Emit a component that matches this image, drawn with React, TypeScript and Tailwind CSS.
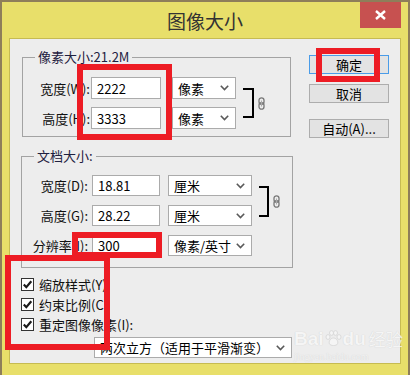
import type { ReactNode } from 'react';

const FONT = '"Noto Sans CJK SC", "Noto Sans", sans-serif';

function Chevron() {
  return (
    <svg width="9" height="6" viewBox="0 0 9 6" className="shrink-0">
      <path d="M0.8 0.8 L4.5 4.5 L8.2 0.8" fill="none" stroke="#5a5a5a" strokeWidth="1.6" />
    </svg>
  );
}

function Select({ value, w, h = 21 }: { value: string; w: number; h?: number }) {
  return (
    <div
      className="flex shrink-0 items-center justify-between border border-[#ababab] bg-white pl-[5px] pr-[6px] text-[13px] text-black"
      style={{ width: w, height: h }}
    >
      <span className="leading-none">{value}</span>
      <Chevron />
    </div>
  );
}

function Field({ value, w, h = 21 }: { value: string; w: number; h?: number }) {
  return (
    <div
      className="flex shrink-0 items-center border border-[#ababab] bg-white pl-[5px] text-[13px] text-black"
      style={{ width: w, height: h }}
    >
      <span className="leading-none">{value}</span>
    </div>
  );
}

function LinkIcon() {
  return (
    <svg width="7" height="13" viewBox="0 0 7 13" className="shrink-0">
      <rect x="1" y="0.8" width="5" height="6.5" rx="2.5" fill="none" stroke="#777" strokeWidth="1.3" />
      <rect x="1" y="5.7" width="5" height="6.5" rx="2.5" fill="none" stroke="#777" strokeWidth="1.3" />
      <line x1="3.5" y1="3.5" x2="3.5" y2="9.5" stroke="#aaa" strokeWidth="1" />
    </svg>
  );
}

function Bracket({ h, w }: { h: number; w: number }) {
  return <div className="shrink-0 border-y-2 border-r-2 border-black" style={{ width: w, height: h }} />;
}

function Group({ title, className, children }: { title: string; className: string; children: ReactNode }) {
  return (
    <div className={`relative border border-[#a3a3a3] ${className}`}>
      <span className="absolute left-[12px] top-[-10px] bg-[#ededed] px-[3px] text-[13px] leading-[18px] text-[#1e2040]">
        {title}
      </span>
      {children}
    </div>
  );
}

function Label({ text, w }: { text: string; w: number }) {
  return (
    <span className="shrink-0 text-right text-[13px] leading-none text-[#111]" style={{ width: w }}>
      {text}
    </span>
  );
}

function Check({ label }: { label: string }) {
  return (
    <div className="flex h-[20px] items-center">
      <div className="flex h-[13px] w-[13px] items-center justify-center border border-[#333] bg-white">
        <svg width="11" height="11" viewBox="0 0 11 11">
          <path d="M1.8 5.6 L4.3 8.2 L9.3 2.3" fill="none" stroke="#1a1a1a" strokeWidth="2.2" />
        </svg>
      </div>
      <span className="ml-[5px] text-[13px] leading-none text-[#111]">{label}</span>
    </div>
  );
}

function Btn({ text, focus }: { text: string; focus?: boolean }) {
  return (
    <div
      className={`flex h-[19px] w-[80px] items-center justify-center border bg-[#e3e3e3] text-[13px] leading-none text-black ${
        focus ? 'border-[#4a9ce8]' : 'border-[#adadad]'
      }`}
    >
      {text}
    </div>
  );
}

function RedBox({ x, y, w, h }: { x: number; y: number; w: number; h: number }) {
  return (
    <div
      className="pointer-events-none absolute border-[6px] border-[#ed1c24]"
      style={{ left: x, top: y, width: w, height: h }}
    />
  );
}

function Paw() {
  return (
    <svg width="17" height="17" viewBox="0 0 17 17" className="mx-[1px]">
      <g fill="#f7f7f7" stroke="#cfcfcf" strokeWidth="0.8">
        <ellipse cx="3" cy="7" rx="2" ry="2.4" />
        <ellipse cx="6.5" cy="3" rx="2" ry="2.4" />
        <ellipse cx="10.5" cy="3" rx="2" ry="2.4" />
        <ellipse cx="14" cy="7" rx="2" ry="2.4" />
        <path d="M8.5 8 C5 8 3.5 12 4.5 14 C5.5 16 11.5 16 12.5 14 C13.5 12 12 8 8.5 8 Z" />
      </g>
    </svg>
  );
}

export default function App() {
  return (
    <div className="relative h-[375px] w-[410px] overflow-hidden bg-[#8e7e5a]" style={{ fontFamily: FONT }}>
      <div className="ml-[2px] mt-[2px] h-[373px] w-[406px] bg-[#e8df6a]">
        {/* title bar */}
        <div className="relative flex h-[36px] items-center justify-center">
          <span className="text-[19px] leading-none text-[#333]">图像大小</span>
          <div className="absolute right-[7px] top-0 flex h-[26px] w-[41px] items-center justify-center bg-[#c75150]">
            <svg width="11" height="10" viewBox="0 0 11 10">
              <path d="M1 1 L10 9 M10 1 L1 9" stroke="white" strokeWidth="2.4" />
            </svg>
          </div>
        </div>

        {/* client area */}
        <div className="ml-[7px] h-[326px] w-[392px] border border-[#c6bb52] bg-[#ededed]">
          <div className="flex items-start">
            <Group title="像素大小:21.2M" className="ml-[12px] mt-[18px] h-[80px] w-[269px]">
              <div className="flex pt-[19px]">
                <div className="flex flex-col gap-[8px]">
                  <div className="flex h-[22px] items-center">
                    <Label text="宽度(W):" w={67} />
                    <div className="ml-[1px]">
                      <Field value="2222" w={70} h={22} />
                    </div>
                    <div className="ml-[11px]">
                      <Select value="像素" w={64} h={22} />
                    </div>
                  </div>
                  <div className="flex h-[22px] items-center">
                    <Label text="高度(H):" w={67} />
                    <div className="ml-[1px]">
                      <Field value="3333" w={70} h={22} />
                    </div>
                    <div className="ml-[11px]">
                      <Select value="像素" w={64} h={22} />
                    </div>
                  </div>
                </div>
                <div className="ml-[7px] mt-[11px]">
                  <Bracket w={11} h={30} />
                </div>
                <div className="ml-[4px] mt-[20px]">
                  <LinkIcon />
                </div>
              </div>
            </Group>

            <div className="ml-[18px] mt-[16px] flex flex-col">
              <Btn text="确定" focus />
              <div className="mt-[10px]">
                <Btn text="取消" />
              </div>
              <div className="mt-[16px]">
                <Btn text="自动(A)..." />
              </div>
            </div>
          </div>

          <Group title="文档大小:" className="ml-[11px] mt-[18px] h-[112px] w-[272px]">
            <div className="flex pt-[18px]">
              <div className="flex flex-col gap-[9px]">
                <div className="flex h-[21px] items-center">
                  <Label text="宽度(D):" w={66} />
                  <div className="ml-[4px]">
                    <Field value="18.81" w={68} />
                  </div>
                  <div className="ml-[8px]">
                    <Select value="厘米" w={84} />
                  </div>
                </div>
                <div className="flex h-[21px] items-center">
                  <Label text="高度(G):" w={66} />
                  <div className="ml-[4px]">
                    <Field value="28.22" w={68} />
                  </div>
                  <div className="ml-[8px]">
                    <Select value="厘米" w={84} />
                  </div>
                </div>
                <div className="flex h-[21px] items-center">
                  <Label text="分辨率(I):" w={66} />
                  <div className="ml-[4px]">
                    <Field value="300" w={68} />
                  </div>
                  <div className="ml-[8px]">
                    <Select value="像素/英寸" w={84} />
                  </div>
                </div>
              </div>
              <div className="ml-[7px] mt-[11px]">
                <Bracket w={10} h={31} />
              </div>
              <div className="ml-[4px] mt-[20px]">
                <LinkIcon />
              </div>
            </div>
          </Group>

          <div className="ml-[11px] mt-[6px] flex flex-col">
            <Check label="缩放样式(Y)" />
            <Check label="约束比例(C)" />
            <Check label="重定图像像素(I):" />
          </div>

          <div className="ml-[84px] mt-[3px]">
            <Select value="两次立方（适用于平滑渐变）" w={198} />
          </div>
        </div>
      </div>

      {/* watermark */}
      <div className="pointer-events-none absolute left-[294px] top-[329px] flex flex-col items-start opacity-80">
        <div className="flex h-[19px] items-center text-[#f7f7f7] [text-shadow:0_0_1px_#c4c4c4]">
          <span className="text-[19px] font-bold leading-[19px]" style={{ fontFamily: '"Liberation Sans", sans-serif' }}>
            Bai
          </span>
          <Paw />
          <span className="text-[19px] font-bold leading-[19px]" style={{ fontFamily: '"Liberation Sans", sans-serif' }}>
            du
          </span>
          <span className="ml-[3px] text-[17px] leading-[19px]">经验</span>
        </div>
        <span
          className="mt-[4px] text-[10px] leading-[10px] text-[#f4f4f4] [text-shadow:0_0_1px_#c8c8c8]"
          style={{ fontFamily: '"Liberation Serif", serif' }}
        >
          jingyan.baidu.com
        </span>
      </div>

      {/* annotation boxes */}
      <RedBox x={77} y={64} w={95} h={76} />
      <RedBox x={316} y={48} w={64} h={34} />
      <RedBox x={72} y={232} w={90} h={26} />
      <RedBox x={5} y={255} w={105} h={95} />
    </div>
  );
}
